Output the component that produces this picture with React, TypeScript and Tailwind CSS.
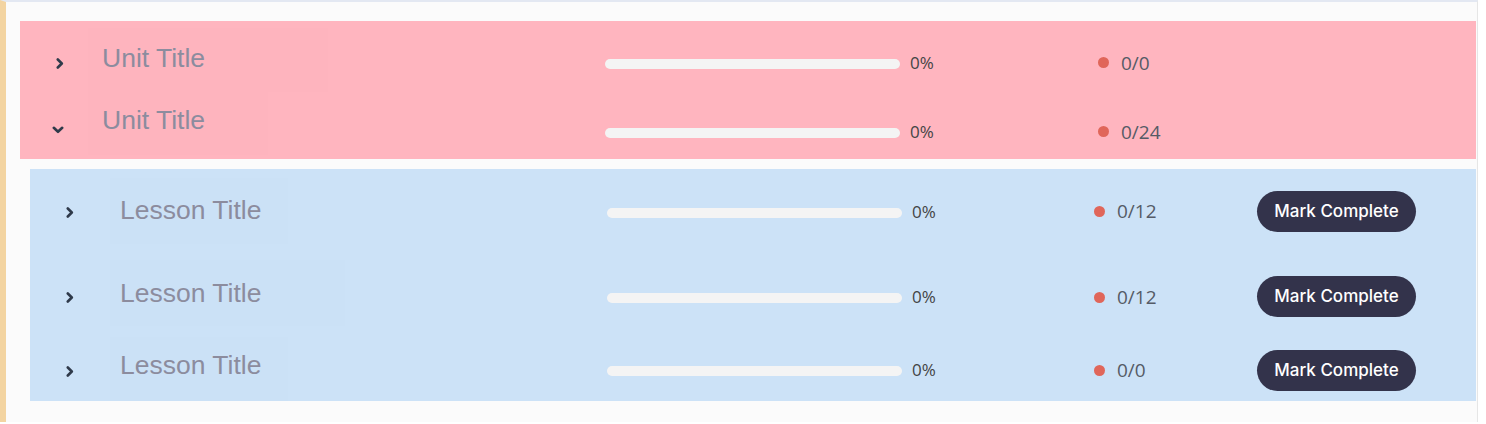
import React from "react";

const ChevronRight = ({ cls }: { cls: string }) => (
  <svg width="8" height="11" viewBox="0 0 8 11" className={cls}>
    <path d="M1.8 1.5 L5.8 5.5 L1.8 9.5" fill="none" stroke="#2f3a4a" strokeWidth="2.6" strokeLinecap="round" strokeLinejoin="round" />
  </svg>
);

const ChevronDown = ({ cls }: { cls: string }) => (
  <svg width="12" height="8" viewBox="0 0 12 8" className={cls}>
    <path d="M1.8 1.8 L6 5.8 L10.2 1.8" fill="none" stroke="#2f3a4a" strokeWidth="2.6" strokeLinecap="round" strokeLinejoin="round" />
  </svg>
);

const numFont = { fontFamily: '"Open Sans", "Liberation Sans", sans-serif' };
const titleFont = { fontFamily: '"Liberation Sans", Arial, sans-serif' };
const btnFont = { fontFamily: 'Inter, "Liberation Sans", sans-serif' };

function Bar() {
  return <div className="h-[10px] w-[295px] rounded-full bg-[#f4f4f4]" />;
}

export default function App() {
  return (
    <div className="h-[424px] w-[1486px] bg-white">
      <div className="h-[422px] w-[1478px] border-l-[6px] border-t-2 border-r border-l-[#f3d4a1] border-t-[#e3e8f2] border-r-[#e6e6e6] bg-[#fbfbfb] pt-[19px]">
        {/* Units */}
        <div className="ml-[14px] w-[1456px] bg-[#ffb5bf]">
          {/* Unit row 1 */}
          <div className="flex h-[71px] items-start">
            <div className="w-[68px] pl-[36px] pt-[37px]">
              <ChevronRight cls="block" />
            </div>
            <div className="mt-[7px] h-[64px] w-[240px] bg-black/[0.004] pl-[14px] pt-[16px]">
              <div className="text-[26.5px] leading-[28px] text-[#8c8c9e]" style={titleFont}>Unit Title</div>
            </div>
            <div className="ml-[277px] mt-[38px]"><Bar /></div>
            <div className="ml-[10px] mt-[32px] w-[188px] text-[17px] leading-[20px] text-[#444]" style={numFont}>0%</div>
            <div className="mt-[36px] h-[11px] w-[11px] rounded-full bg-[#e0665a]" />
            <div className="ml-[12px] mt-[30px] text-[19px] leading-[24px] text-[#555b66]" style={numFont}>0/0</div>
          </div>
          {/* Unit row 2 */}
          <div className="flex h-[67px] items-start">
            <div className="w-[68px] pl-[32px] pt-[34px]">
              <ChevronDown cls="block" />
            </div>
            <div className="h-[63px] w-[180px] bg-black/[0.004] pl-[14px] pt-[14px]">
              <div className="text-[26.5px] leading-[28px] text-[#8c8c9e]" style={titleFont}>Unit Title</div>
            </div>
            <div className="ml-[337px] mt-[36px]"><Bar /></div>
            <div className="ml-[10px] mt-[30px] w-[188px] text-[17px] leading-[20px] text-[#444]" style={numFont}>0%</div>
            <div className="mt-[34px] h-[11px] w-[11px] rounded-full bg-[#e0665a]" />
            <div className="ml-[12px] mt-[28px] text-[19px] leading-[24px] text-[#555b66]" style={numFont}>0/24</div>
          </div>
        </div>

        {/* Lessons */}
        <div className="ml-[24px] mt-[10px] w-[1446px] bg-[#cce2f7]">
          {/* Lesson row 1 */}
          <div className="flex h-[86px] items-start">
            <div className="w-[80px] pl-[36px] pt-[38px]">
              <ChevronRight cls="block" />
            </div>
            <div className="mt-[9px] h-[66px] w-[178px] bg-black/[0.004] pl-[10px] pt-[18px]">
              <div className="text-[26.5px] leading-[28px] text-[#8c8c9e]" style={titleFont}>Lesson Title</div>
            </div>
            <div className="ml-[319px] mt-[39px]"><Bar /></div>
            <div className="ml-[10px] mt-[33px] w-[182px] text-[17px] leading-[20px] text-[#444]" style={numFont}>0%</div>
            <div className="mt-[37px] h-[11px] w-[11px] rounded-full bg-[#e0665a]" />
            <div className="ml-[12px] mt-[30px] w-[140px] text-[19px] leading-[24px] text-[#555b66]" style={numFont}>0/12</div>
            <button className="mt-[22px] h-[41px] w-[159px] rounded-full bg-[#33334b] text-[17px] font-medium text-white" style={btnFont}>Mark Complete</button>
          </div>
          {/* Lesson row 2 */}
          <div className="flex h-[77px] items-start">
            <div className="w-[80px] pl-[36px] pt-[37px]">
              <ChevronRight cls="block" />
            </div>
            <div className="mt-[5px] h-[66px] w-[235px] bg-black/[0.004] pl-[10px] pt-[19px]">
              <div className="text-[26.5px] leading-[28px] text-[#8c8c9e]" style={titleFont}>Lesson Title</div>
            </div>
            <div className="ml-[262px] mt-[38px]"><Bar /></div>
            <div className="ml-[10px] mt-[32px] w-[182px] text-[17px] leading-[20px] text-[#444]" style={numFont}>0%</div>
            <div className="mt-[37px] h-[11px] w-[11px] rounded-full bg-[#e0665a]" />
            <div className="ml-[12px] mt-[30px] w-[140px] text-[19px] leading-[24px] text-[#555b66]" style={numFont}>0/12</div>
            <button className="mt-[21px] h-[41px] w-[159px] rounded-full bg-[#33334b] text-[17px] font-medium text-white" style={btnFont}>Mark Complete</button>
          </div>
          {/* Lesson row 3 */}
          <div className="flex h-[69px] items-start">
            <div className="w-[80px] pl-[36px] pt-[34px]">
              <ChevronRight cls="block" />
            </div>
            <div className="mt-[5px] h-[64px] w-[178px] bg-black/[0.004] pl-[10px] pt-[14px]">
              <div className="text-[26.5px] leading-[28px] text-[#8c8c9e]" style={titleFont}>Lesson Title</div>
            </div>
            <div className="ml-[319px] mt-[34px]"><Bar /></div>
            <div className="ml-[10px] mt-[28px] w-[182px] text-[17px] leading-[20px] text-[#444]" style={numFont}>0%</div>
            <div className="mt-[33px] h-[11px] w-[11px] rounded-full bg-[#e0665a]" />
            <div className="ml-[12px] mt-[26px] w-[140px] text-[19px] leading-[24px] text-[#555b66]" style={numFont}>0/0</div>
            <button className="mt-[18px] h-[41px] w-[159px] rounded-full bg-[#33334b] text-[17px] font-medium text-white" style={btnFont}>Mark Complete</button>
          </div>
        </div>
      </div>
    </div>
  );
}
